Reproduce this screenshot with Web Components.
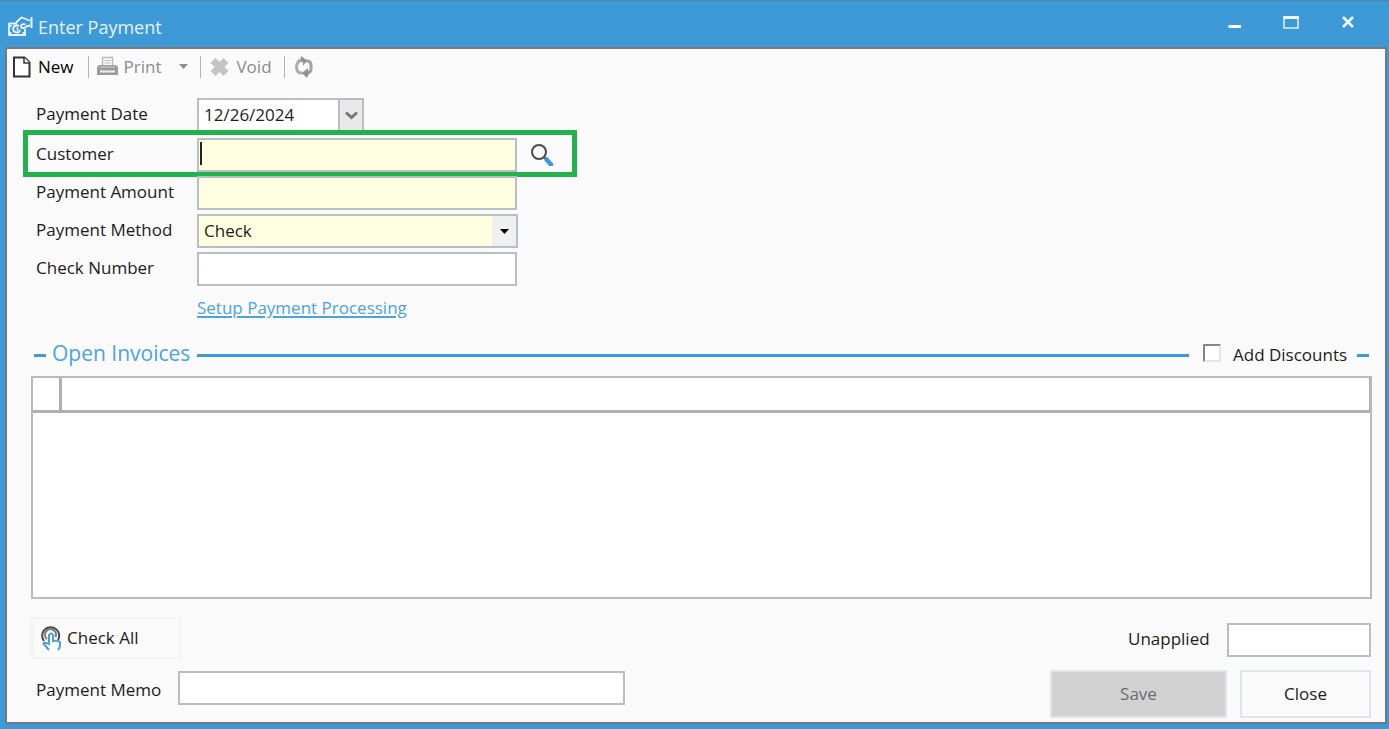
<!DOCTYPE html>
<html lang="en">
<head>
<meta charset="utf-8">
<title>Enter Payment</title>
<style>
  html, body { margin: 0; min-height: 100%; }
  body { background: #3e9ad6; font: 17px/24px "Open Sans", "Noto Sans", sans-serif; color: #1c1c1c; }
</style>
</head>
<body>
<payment-window caption="Enter Payment">
  <payment-toolbar></payment-toolbar>
  <payment-form></payment-form>
  <group-header caption="Open Invoices"></group-header>
  <invoice-grid></invoice-grid>
  <payment-footer></payment-footer>
</payment-window>

<script>
const base = `
  *, *::before, *::after { box-sizing: border-box; }
  button, input, select { font: inherit; color: inherit; margin: 0; border-radius: 0; }
  svg { display: block; flex: none; }
`;

const define = (name, render) => customElements.define(name, class extends HTMLElement {
  constructor() { super(); this.attachShadow({ mode: 'open' }); }
  connectedCallback() {
    const template = document.createElement('template');
    template.innerHTML = render(this);
    this.shadowRoot.replaceChildren(template.content.cloneNode(true));
  }
});

define('payment-window', el => `
  <style>${base}
    :host { display: flex; flex-direction: column; min-height: 100vh; box-sizing: border-box;
      padding: 0 2px 5px 5px; border-top: 1px solid #4d87ad; background: #3e9ad6; }
    header { display: flex; align-items: center; gap: 5px; height: 46px; padding: 6px 30px 0 3px; }
    h1 { flex: 1; margin: 0; font-size: 18px; line-height: 24px; font-weight: 400; color: #e2f2fc; }
    nav { display: flex; align-items: center; gap: 40px; margin-top: -10px; }
    nav button { display: block; padding: 0; border: 0; background: none; }
    main { flex: 1; display: flex; flex-direction: column; border: 2px solid #777a7c;
      background: #fafafa; padding-bottom: 4px; }
  </style>
  <header>
    <svg width="25" height="22" viewBox="0 0 25 22" fill="none" stroke="#e8f5fc">
      <path d="M1 7.500h8M1 7v12h16v-6M2.500 9v2M2.500 16v2M15.500 16v2" stroke-width="1.800"/>
      <path d="M11 9.500H8.500a3.500 3.500 0 1 0 3.500 4.500M9.500 11.500v3" stroke-width="1.800"/>
      <path d="M8 6.500l5.500-5L19 3.500l3 1" stroke-width="1.800"/>
      <path d="M17.500 8.500c-3-1-5 .5-4.500 2.500s4 1 6-1l3-.5" stroke-width="1.800"/>
      <path d="M23.500 1v11" stroke-width="2"/>
    </svg>
    <h1>${el.getAttribute('caption')}</h1>
    <nav>
      <button aria-label="Minimize"><svg width="16" height="16"><path d="M1.500 12.500h12.500" stroke="#fff" stroke-width="3"/></svg></button>
      <button aria-label="Maximize"><svg width="16" height="14"><path d="M0 2.500h16" stroke="#fff" stroke-width="3"/><path d="M1 2h14v11H1z" fill="none" stroke="#e0f1fb" stroke-width="1.500"/></svg></button>
      <button aria-label="Close window"><svg width="18" height="14"><path d="M4 2l10 10M14 2L4 12" stroke="#eef8fe" stroke-width="2.500"/></svg></button>
    </nav>
  </header>
  <main><slot></slot></main>
`);

define('payment-toolbar', () => `
  <style>${base}
    :host { display: flex; align-items: center; height: 35px; padding-left: 5px; color: #000; }
    button { display: flex; align-items: center; gap: 6px; padding: 0; border: 0; background: none; height: 28px; }
    button:disabled { color: #8c8c8c; }
    .menu { margin-left: 18px; }
    i { width: 1px; height: 22px; margin: 0 8px 0 14px; background: #b4b4b4; }
    i.tight { margin: 0 9px 0 12px; }
  </style>
  <button><svg width="20" height="22" viewBox="0 0 20 22" fill="#fff" stroke="#333" stroke-width="2"><path d="M2 1.500h10.500l5 5v14H2z"/><path d="M12 1.500V7h6" stroke-width="1.500"/></svg>New</button>
  <i></i>
  <button disabled><svg width="21" height="21" viewBox="0 0 21 21"><path d="M5.500 9V1.500h10V9" fill="#fafafa" stroke="#bcbcbc" stroke-width="1.500"/><path d="M7.500 4.500h6M7.500 7h6" stroke="#bcbcbc"/><path d="M2 9h17l2 2v8H0v-8z" fill="#9b9b9b"/><path d="M3 15.500h15" stroke="#eee" stroke-width="2"/><path d="M3 11h15" stroke="#b8b8b8" stroke-width="2"/></svg>Print</button>
  <button class="menu" disabled aria-label="Print options"><svg width="9" height="5"><path d="M0 0h9L4.500 5z" fill="#8d8d8d"/></svg></button>
  <i class="tight"></i>
  <button disabled><svg width="20" height="20" viewBox="0 0 20 20"><path d="M3 3.500l13 13M16 3.500l-13 13" stroke="#c4c4c4" stroke-width="7"/></svg>Void</button>
  <i class="tight"></i>
  <button disabled aria-label="Refresh"><svg width="21" height="22" viewBox="0 0 21 22" fill="none" stroke-width="3"><path d="M9 17H7q-3 0-4-3-1-3 0-6 1-3 4-4h2" stroke="#adadad"/><path d="M12 5h2q3 1 3 4v4q0 3-3 4h-1" stroke="#a3a3a3"/><path d="M7 0l6 4.500-4 5.500V6H7zM14 12v3h2l-3 7-5-5z" fill="#929292"/></svg></button>
`);

/* One captioned control: kind is text, date or select. */
define('form-field', el => {
  const kind = el.getAttribute('kind') || 'text';
  const value = el.getAttribute('value') || '';
  const control = {
    text: `<input id="c" type="text" value="${value}">${el.hasAttribute('editing') ? '<span class="caret"></span>' : ''}`,
    date: `<input id="c" type="text" value="${value}"><button aria-label="Open calendar"><svg width="13" height="9"><path d="M1 1.500l5.500 5 5.500-5" fill="none" stroke="#767676" stroke-width="3"/></svg></button>`,
    select: `<select id="c"><option>${value}</option></select><span class="drop"><svg width="9" height="5"><path d="M0 0h9L4.500 5z"/></svg></span>`
  }[kind];
  return `
  <style>${base}
    :host { display: flex; align-items: flex-start; }
    label { flex: none; width: var(--label-width, 161px); padding-top: 4px; white-space: nowrap; }
    .control { position: relative; display: flex; flex: 0 1 var(--control-width, 320px); min-width: 0; height: 34px; }
    .control.date { flex-basis: 167px; }
    .control.select { flex-basis: 321px; }
    input, select { width: 100%; min-width: 0; height: 34px; padding: 0 5px; border: 2px solid #b9bec3;
      background: #fff; appearance: none; outline: 0; }
    .date input { padding-bottom: 2px; border-right-width: 1px; }
    :host([required]) input, :host([required]) select { background: #ffffe1; }
    .caret { position: absolute; left: 3px; top: 4px; width: 2px; height: 23px; background: #222; }
    button { flex: none; display: grid; place-items: center; width: 25px; padding: 0;
      border: 2px solid #bcbcbc; border-left-width: 1px; background: #e9e9e9; }
    .drop { position: absolute; right: 2px; top: 2px; bottom: 2px; width: 24px; display: grid;
      place-items: center; background: #f0f0f0; pointer-events: none; }
  </style>
  <label for="c">${el.getAttribute('label')}</label>
  <div class="control ${kind}">${control}</div>
  <slot></slot>`;
});

define('payment-form', () => `
  <style>${base}
    :host { display: flex; flex-direction: column; gap: 4px; padding: 14px 13px 0 29px; }
    .lookup { position: relative; margin-top: 2px; }
    .lookup::after { content: ""; position: absolute; inset: -8px auto -5px -13px; width: 554px;
      border: 5px solid #22b14c; pointer-events: none; }
    .find { width: 34px; height: 34px; margin-left: 8px; padding: 0; border: 0; background: none;
      display: grid; place-items: center; }
    a { align-self: flex-start; margin: 6px 0 0 161px; color: #4ba4dd; text-decoration-thickness: 2px; text-underline-offset: 2px; }
  </style>
  <form-field kind="date" label="Payment Date" value="12/26/2024"></form-field>
  <form-field class="lookup" label="Customer" required editing>
    <button class="find" aria-label="Find customer"><svg width="24" height="22" viewBox="0 0 24 22" fill="none"><circle cx="9" cy="8" r="7" stroke="#4b4b4b" stroke-width="2"/><path d="M14 13l3 3" stroke="#4b4b4b" stroke-width="2"/><path d="M16.500 15.500l4.500 5" stroke="#3e9ad6" stroke-width="4.500" stroke-linecap="round"/></svg></button>
  </form-field>
  <form-field label="Payment Amount" required></form-field>
  <form-field kind="select" label="Payment Method" value="Check" required></form-field>
  <form-field label="Check Number"></form-field>
  <a href="#setup">Setup Payment Processing</a>
`);

define('group-header', el => `
  <style>${base}
    :host { display: flex; align-items: center; height: 28px; margin: 21px 16px 0 27px; }
    h2 { margin: 0 7px 4px 6px; font-size: 21px; line-height: 28px; font-weight: 400; color: #4ba4dd; }
    i { width: 12px; height: 3px; background: #3e9ad6; }
    i.rule { flex: 1; }
    input { appearance: none; width: 18px; height: 18px; margin: 0 12px 4px 14px; background: #fff;
      border: 2px solid; border-color: #858585 #e4e4e4 #e4e4e4 #858585; }
    label { width: 116px; margin-right: 8px; white-space: nowrap; }
  </style>
  <i></i><h2>${el.getAttribute('caption')}</h2><i class="rule"></i>
  <input id="d" type="checkbox"><label for="d">Add Discounts</label><i></i>
`);

define('invoice-grid', () => `
  <style>${base}
    :host { flex: 1; display: block; margin: 7px 13px 0 24px; background: #fff; border: 2px solid #bababa; }
    table { width: 100%; border-collapse: separate; border-spacing: 0; table-layout: fixed; }
    th { height: 35px; padding: 0; border-bottom: 3px solid #b0b0b0; }
    th:first-child { width: 29px; border-right: 3px solid #b0b0b0; }
    th:last-child { border-right: 1px solid #b0b0b0; }
  </style>
  <table aria-label="Open invoices"><thead><tr><th></th><th></th></tr></thead><tbody></tbody></table>
`);

define('payment-footer', () => `
  <style>${base}
    :host { display: grid; grid-template-columns: 1fr 321px; gap: 11px 20px; padding: 18px 14px 0 24px; }
    .all { display: flex; align-items: center; gap: 6px; width: 150px; height: 42px; padding: 0 8px;
      border: 2px solid #f2f2f2; background: #fafafa; }
    .memo { --label-width: 142px; --control-width: 447px; align-items: center; height: 36px; padding-left: 5px; }
    .unapplied { --label-width: 99px; --control-width: 144px; justify-content: flex-end; margin-top: 6px; }
    .actions { display: grid; grid-template-columns: 177fr 131fr; gap: 13px; height: 48px; }
    .actions button { border: 2px solid #e0e2ec; background: #fafafa; }
    .actions button:disabled { background: #d2d2d2; color: #6c6c6c; }
  </style>
  <button class="all"><svg width="20" height="26" viewBox="0 0 20 26" fill="none"><path d="M3 16A8.500 8.500 0 1 1 17 15" stroke="#4a4a4a" stroke-width="2"/><path d="M6 14A5.500 5.500 0 1 1 14.500 12" stroke="#777" stroke-width="2"/><path d="M2 18l6 7M2 18q3-1 6 1V10q2-3 4 0v6q5-1 7 1v3q0 3-2 5" stroke="#4aa0d4" stroke-width="2"/></svg>Check All</button>
  <form-field class="unapplied" label="Unapplied"></form-field>
  <form-field class="memo" label="Payment Memo"></form-field>
  <div class="actions"><button disabled>Save</button><button>Close</button></div>
`);
</script>
</body>
</html>
